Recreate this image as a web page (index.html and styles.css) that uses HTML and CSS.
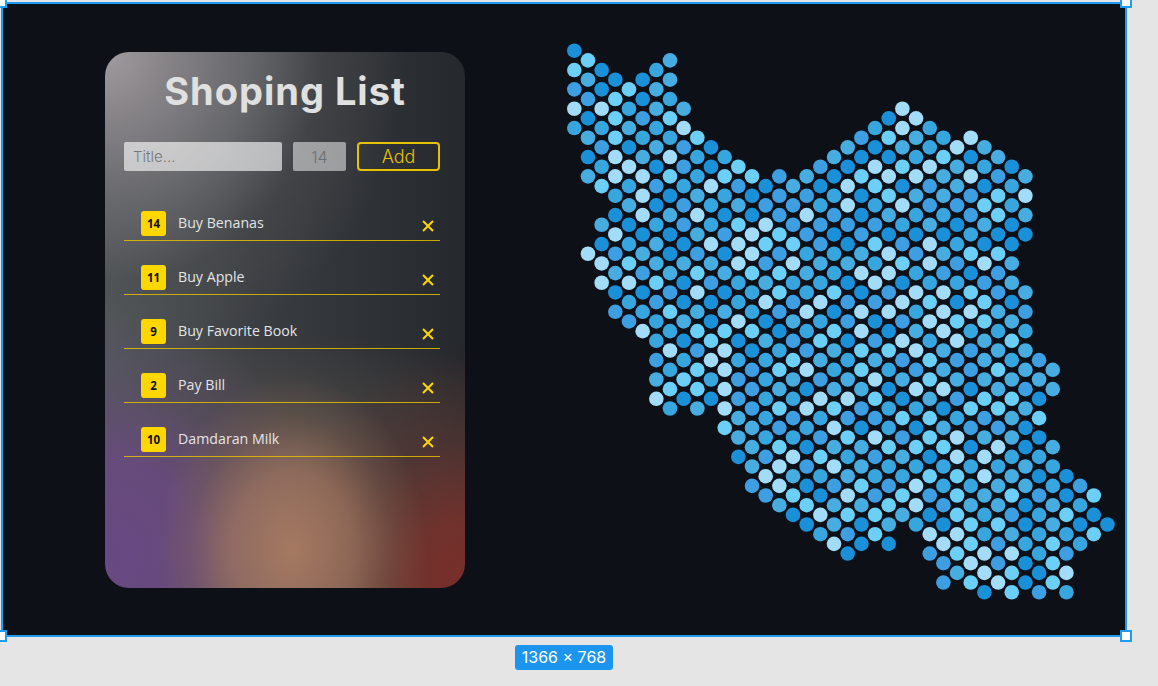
FILE: index.html
```html
<!DOCTYPE html>
<html lang="en">
<head>
<meta charset="utf-8">
<title>Shoping List</title>
<link rel="stylesheet" href="styles.css">
</head>
<body>
<div class="artboard">
  <span class="handle tl"></span><span class="handle tr"></span><span class="handle bl"></span><span class="handle br"></span>
  <section class="card">
    <h1 class="title">Shoping List</h1>
    <form class="entry">
      <input class="field field-title" placeholder="Title...">
      <input class="field field-num" value="14">
      <button class="add" type="button">Add</button>
    </form>
    <ul class="list">
      <li class="item"><span class="badge">14</span><span class="label">Buy Benanas</span><svg class="x" viewBox="0 0 12 12"><path d="M1 1L11 11M11 1L1 11"/></svg></li>
      <li class="item"><span class="badge">11</span><span class="label">Buy Apple</span><svg class="x" viewBox="0 0 12 12"><path d="M1 1L11 11M11 1L1 11"/></svg></li>
      <li class="item"><span class="badge">9</span><span class="label">Buy Favorite Book</span><svg class="x" viewBox="0 0 12 12"><path d="M1 1L11 11M11 1L1 11"/></svg></li>
      <li class="item"><span class="badge">2</span><span class="label">Pay Bill</span><svg class="x" viewBox="0 0 12 12"><path d="M1 1L11 11M11 1L1 11"/></svg></li>
      <li class="item"><span class="badge">10</span><span class="label">Damdaran Milk</span><svg class="x" viewBox="0 0 12 12"><path d="M1 1L11 11M11 1L1 11"/></svg></li>
    </ul>
  </section>
  <svg class="map" id="map" viewBox="560 35 560 570" width="560" height="570"></svg>
</div>
<div class="size-row"><span class="size">1366 × 768</span></div>
<script src="map.js"></script>
</body>
</html>
```
FILE: styles.css
```css
html, body { margin: 0; height: 686px; overflow: hidden; }
body { background: #e5e5e5; font-family: "Open Sans", sans-serif; }
.artboard {
  position: relative;
  box-sizing: border-box;
  width: 1126px;
  height: 635px;
  margin: 2px 0 0 1px;
  border: 2px solid #1f9bf0;
  background: #0d1017;
  display: flex;
  align-items: flex-start;
  padding: 48px 0 0 102px;
}
.handle {
  position: absolute;
  box-sizing: border-box;
  width: 12px;
  height: 12px;
  background: #fff;
  border: 2px solid #1f9bf0;
}
.tl { left: -8px; top: -8px; }
.tr { right: -7px; top: -8px; }
.bl { left: -8px; bottom: -7px; }
.br { right: -7px; bottom: -7px; }
.card {
  box-sizing: border-box;
  flex: none;
  width: 360px;
  height: 536px;
  border-radius: 24px;
  padding: 15px 25px 0 19px;
  background:
    radial-gradient(135px 175px at 52% 93%, rgba(172,125,99,.92) 0%, rgba(165,120,98,.7) 45%, rgba(140,105,85,.3) 75%, rgba(120,95,80,0) 100%),
    radial-gradient(190px 240px at 100% 100%, rgba(125,45,40,.95) 0%, rgba(120,48,42,.85) 28%, rgba(85,45,42,.5) 62%, rgba(60,40,40,0) 100%),
    radial-gradient(220px 240px at 2% 94%, rgba(104,72,130,1) 0%, rgba(104,72,130,.85) 38%, rgba(90,72,110,.4) 70%, rgba(80,70,90,0) 100%),
    radial-gradient(360px 190px at 50% 88%, rgba(125,100,85,.55) 0%, rgba(110,95,85,.3) 60%, rgba(90,85,80,0) 100%),
    radial-gradient(300px 320px at 0% 0%, #a09b9f 0%, #858286 22%, #66676a 48%, rgba(75,77,80,.55) 72%, rgba(60,62,66,0) 100%),
    linear-gradient(90deg, #565b5e 0%, #3a3d41 42%, #25282c 100%);
}
.title {
  margin: 0;
  height: 48px;
  text-align: center;
  padding-left: 6px;
  font: 700 38px/48px "Inter", sans-serif;
  letter-spacing: 1px;
  color: #e0e0e0;
}
.entry {
  display: flex;
  margin: 27px 0 0;
  height: 29px;
}
.field {
  box-sizing: border-box;
  height: 29px;
  border: 0;
  border-radius: 2px;
  outline: 0;
  padding: 0;
  font: 300 15px "Inter", sans-serif;
  color: #6e6f72;
}
.field::placeholder { color: #77777a; opacity: 1; }
.field-title { width: 158px; padding-left: 9px; background: rgba(255,255,255,.62); }
.field-num { width: 53px; margin-left: 11px; text-align: center; font-size: 16px; background: rgba(255,255,255,.5); }
.add {
  box-sizing: border-box;
  width: 83px;
  margin-left: 11px;
  border: 2px solid #e6c200;
  border-radius: 4px;
  background: transparent;
  padding: 0;
  font: 300 18px "Inter", sans-serif;
  color: #e6c200;
}
.list { list-style: none; margin: 0; padding: 0; }
.item {
  box-sizing: border-box;
  display: flex;
  align-items: flex-start;
  height: 54px;
  padding: 24px 6px 0 17px;
  border-bottom: 1px solid rgba(232,190,0,.85);
}
.item:first-child { margin-top: 15px; height: 55px; padding-top: 25px; }
.badge {
  flex: none;
  width: 25px;
  height: 25px;
  border-radius: 3px;
  background: #ffd700;
  color: #111;
  text-align: center;
  font: 700 11.5px/25px "Open Sans", sans-serif;
}
.label {
  flex: 1;
  margin-left: 12px;
  font: 400 14.2px/24px "Open Sans", sans-serif;
  color: #e4e4e6;
}
.x {
  flex: none;
  width: 12px;
  height: 12px;
  margin-top: 9px;
  fill: none;
  stroke: #ffd700;
  stroke-width: 2;
}
.map { flex: none; margin: -17px 0 0 95px; overflow: visible; }
.d { r: 7.3px; }
.a { fill: #1a90d9; }
.b { fill: #3d9ee2; }
.c { fill: #37a6df; }
.e { fill: #6ccff7; }
.f { fill: #a2dcf8; }
.g { fill: #47acdf; }
.size-row { padding: 8px 0 0 515px; }
.size {
  display: inline-block;
  width: 98px;
  height: 25px;
  border-radius: 3px;
  background: #1b95ee;
  color: #fff;
  text-align: center;
  font: 400 16px/25px "Inter", sans-serif;
}
```
FILE: map.js
```js
var rows = ["0:a","1:e..d","0:ea.c","1:daad","0:baed","1:beac","0:ffcdd.......f","1:aebe.......af","0:ccdcf......cfc","1:decce.....bedcf","2:badba....dadcfd","1:afdfcc...daacead","2:cfabae..bafefdca","1:dffeceebdaeffdfbd","2:ecbcfbadafeabdac","3:cfadcabbcaeddbef","4:dabcdbbcfcfbbec","3:afdfaabfbadccbed","2:dacbcefbbbbcdada","3:faadbfebabaaacaa","2:acdaffeebaebfcaa","1:fbdabafbccdfbdee","2:fedddfbfddcefbfd","3:dbdedeedcffcbab","2:ffeabcdccafaccbd","3:aabfaceceabffebd","4:cbaacfbfbbfeaea","3:bceddcbfaffcffdb","4:bcdafadcbabfeed","5:fceeeacefadfccc","6:caeadbeabfcfde","7:fbfacbdeefdbdd","6:bcfccedcdbebdcb","7:cefbefcecbdbedd","6:decbcdbdfdedddd","7:eefbdaddaffadbd","6:faabccffeadbeea","7:cdfbefebccaeed","12:dcbcbbeecbde","11:edbcfacadbba","12:dccbefbefdda","13:deaddeeeafad","12:abfecbdaffcc","13:dfbfdcccccdc","14:fdcdcceefdaa","13:bfabebfccddcb","14:beafbebedebae","15:deddefbddadc","16:afeedaecbcea","17:adadcaeeadaa","18:cbe.ffcdcce","19:faa.febcec","20:a..beffcb","27:bfbae","28:dfeaf","27:befae","30:aebc"];
var map = document.getElementById("map");
rows.forEach(function (row, h) {
  var parts = row.split(":"), start = +parts[0];
  parts[1].split("").forEach(function (k, i) {
    if (k === ".") return;
    var dot = document.createElementNS("http://www.w3.org/2000/svg", "circle");
    dot.setAttribute("cx", (574.3 + 13.67 * (start + 2 * i)).toFixed(2));
    dot.setAttribute("cy", (50.7 + 9.67 * h).toFixed(2));
    dot.setAttribute("class", "d " + (k === "d" ? "g" : k));
    map.appendChild(dot);
  });
});
```
